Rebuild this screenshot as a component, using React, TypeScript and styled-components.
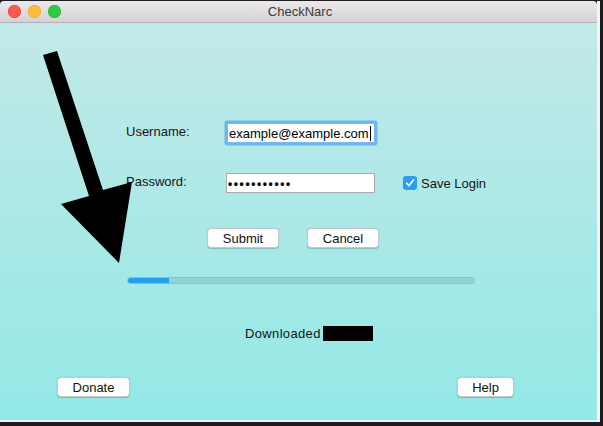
import React from "react";
import styled, { createGlobalStyle } from "styled-components";

const GlobalStyle = createGlobalStyle`
  html, body { margin: 0; padding: 0; }
  body {
    background: #1d1c1f;
    font-family: "Liberation Sans", Arial, Helvetica, sans-serif;
    font-size: 13px;
    color: #111;
    width: 603px;
    height: 426px;
    overflow: hidden;
  }
`;

const Window = styled.div`
  position: relative;
  margin-top: 1px;
  width: 597px;
  border-right: 3px solid #f2f4f4;
  border-bottom: 2px solid #f2f4f4;
  display: flex;
  flex-direction: column;
`;

const TitleBar = styled.div`
  height: 21px;
  border-bottom: 1px solid #b1afb1;
  background: linear-gradient(#ebe9eb, #d4d2d4);
  border-radius: 4px 4px 0 0;
  display: grid;
  grid-template-columns: 1fr auto 1fr;
  align-items: center;
`;

const Lights = styled.div`
  display: flex;
  gap: 7px;
  padding-left: 8px;
`;

const Light = styled.span<{ $c: string; $b: string }>`
  width: 13px;
  height: 13px;
  border-radius: 50%;
  background: ${(p) => p.$c};
  box-shadow: inset 0 0 0 0.5px ${(p) => p.$b};
`;

const Title = styled.div`
  font-size: 13px;
  color: #3b3a3c;
  padding-left: 3px;
`;

const Content = styled.div`
  height: 397px;
  background: linear-gradient(#c2e9e8, #93e8e6);
  display: flex;
  flex-direction: column;
`;

const Form = styled.div`
  margin: 98px 0 0 126px;
  display: grid;
  grid-template-columns: 100px 149px auto;
  grid-template-rows: 24px 20px;
  row-gap: 28px;
  align-items: center;
`;

const Label = styled.div`
  font-size: 13px;
  color: #151515;
  margin-top: -3px;
`;

const Field = styled.div<{ $focused?: boolean }>`
  box-sizing: border-box;
  height: 20px;
  width: ${(p) => (p.$focused ? "148px" : "149px")};
  margin-left: ${(p) => (p.$focused ? "1px" : "0")};
  background: #fff;
  border: 1px solid ${(p) => (p.$focused ? "#7fb8e8" : "#a9aaab")};
  box-shadow: ${(p) => (p.$focused ? "0 0 0 2.5px #6bb7ec" : "none")};
  border-radius: ${(p) => (p.$focused ? "1px" : "0")};
  display: flex;
  align-items: center;
  padding-left: 1px;
  font-size: 13px;
  color: #000;
  white-space: nowrap;
  overflow: hidden;
`;

const Caret = styled.span`
  width: 1px;
  height: 15px;
  background: #000;
  margin-left: 1px;
`;

const Dots = styled.span`
  font-size: 12px;
  letter-spacing: 1.6px;
  font-weight: bold;
  padding-top: 1px;
`;

const CheckGroup = styled.label`
  display: flex;
  align-items: center;
  gap: 4px;
  margin-left: 28px;
  font-size: 13px;
  color: #151515;
`;

const CheckBox = styled.span`
  width: 14px;
  height: 14px;
  border-radius: 3px;
  background: #2b9cf2;
  display: flex;
  align-items: center;
  justify-content: center;
`;

const ButtonRow = styled.div<{ $left: number }>`
  display: flex;
  gap: 28px;
  padding-left: ${(p) => p.$left}px;
  margin-top: 35px;
`;

const Button = styled.button<{ $w: number }>`
  box-sizing: border-box;
  width: ${(p) => p.$w}px;
  height: 20px;
  padding: 0;
  background: #fff;
  border: 1px solid #c3c7c7;
  border-radius: 4px;
  box-shadow: 0 0.5px 1px rgba(0, 0, 0, 0.2);
  font-family: "Liberation Sans", Arial, sans-serif;
  font-size: 13px;
  color: #111;
`;

const Track = styled.div`
  box-sizing: border-box;
  margin: 29px 0 0 127px;
  width: 348px;
  height: 7px;
  border-radius: 4px;
  background: #93d4d3;
  border: 1px solid #83c5c4;
  overflow: hidden;
  display: flex;
`;

const Fill = styled.div`
  height: 100%;
  background: #229ff0;
`;

const DownloadRow = styled.div`
  display: flex;
  align-items: center;
  margin: 41px 0 0 245px;
  height: 16px;
  font-size: 13px;
  letter-spacing: 0.35px;
  color: #151515;
`;

const Redact = styled.span`
  width: 50px;
  height: 15px;
  background: #000;
  margin-left: 2px;
`;

const Footer = styled.div`
  margin-top: auto;
  padding: 0 83px 23px 57px;
  display: flex;
  justify-content: space-between;
`;

const Arrow = styled.svg`
  position: absolute;
  left: 0;
  top: 0;
  pointer-events: none;
`;

export default function App() {
  const progress = 41 / 346;
  return (
    <>
      <GlobalStyle />
      <Window>
        <TitleBar>
          <Lights>
            <Light $c="#fc5753" $b="#df3d38" />
            <Light $c="#fdbc40" $b="#de9e2a" />
            <Light $c="#33c748" $b="#27aa35" />
          </Lights>
          <Title>CheckNarc</Title>
          <div />
        </TitleBar>
        <Content>
          <Form>
            <Label>Username:</Label>
            <Field $focused>
              example@example.com
              <Caret />
            </Field>
            <div />
            <Label>Password:</Label>
            <Field>
              <Dots>•••••••••••</Dots>
            </Field>
            <CheckGroup>
              <CheckBox>
                <svg width="10" height="10" viewBox="0 0 10 10">
                  <path
                    d="M1.6 5.2 L4 7.6 L8.6 1.8"
                    fill="none"
                    stroke="#fff"
                    strokeWidth="1.6"
                    strokeLinecap="round"
                    strokeLinejoin="round"
                  />
                </svg>
              </CheckBox>
              Save Login
            </CheckGroup>
          </Form>
          <ButtonRow $left={207}>
            <Button $w={72}>Submit</Button>
            <Button $w={72}>Cancel</Button>
          </ButtonRow>
          <Track>
            <Fill style={{ width: `${progress * 100}%` }} />
          </Track>
          <DownloadRow>
            Downloaded
            <Redact />
          </DownloadRow>
          <Footer>
            <Button $w={73}>Donate</Button>
            <Button $w={57}>Help</Button>
          </Footer>
        </Content>
        <Arrow width="200" height="280" viewBox="0 0 200 280">
          <polygon
            points="43,54 57,50 103,189 132,181 119,262 61,203 89,195"
            fill="#000"
          />
        </Arrow>
      </Window>
    </>
  );
}
